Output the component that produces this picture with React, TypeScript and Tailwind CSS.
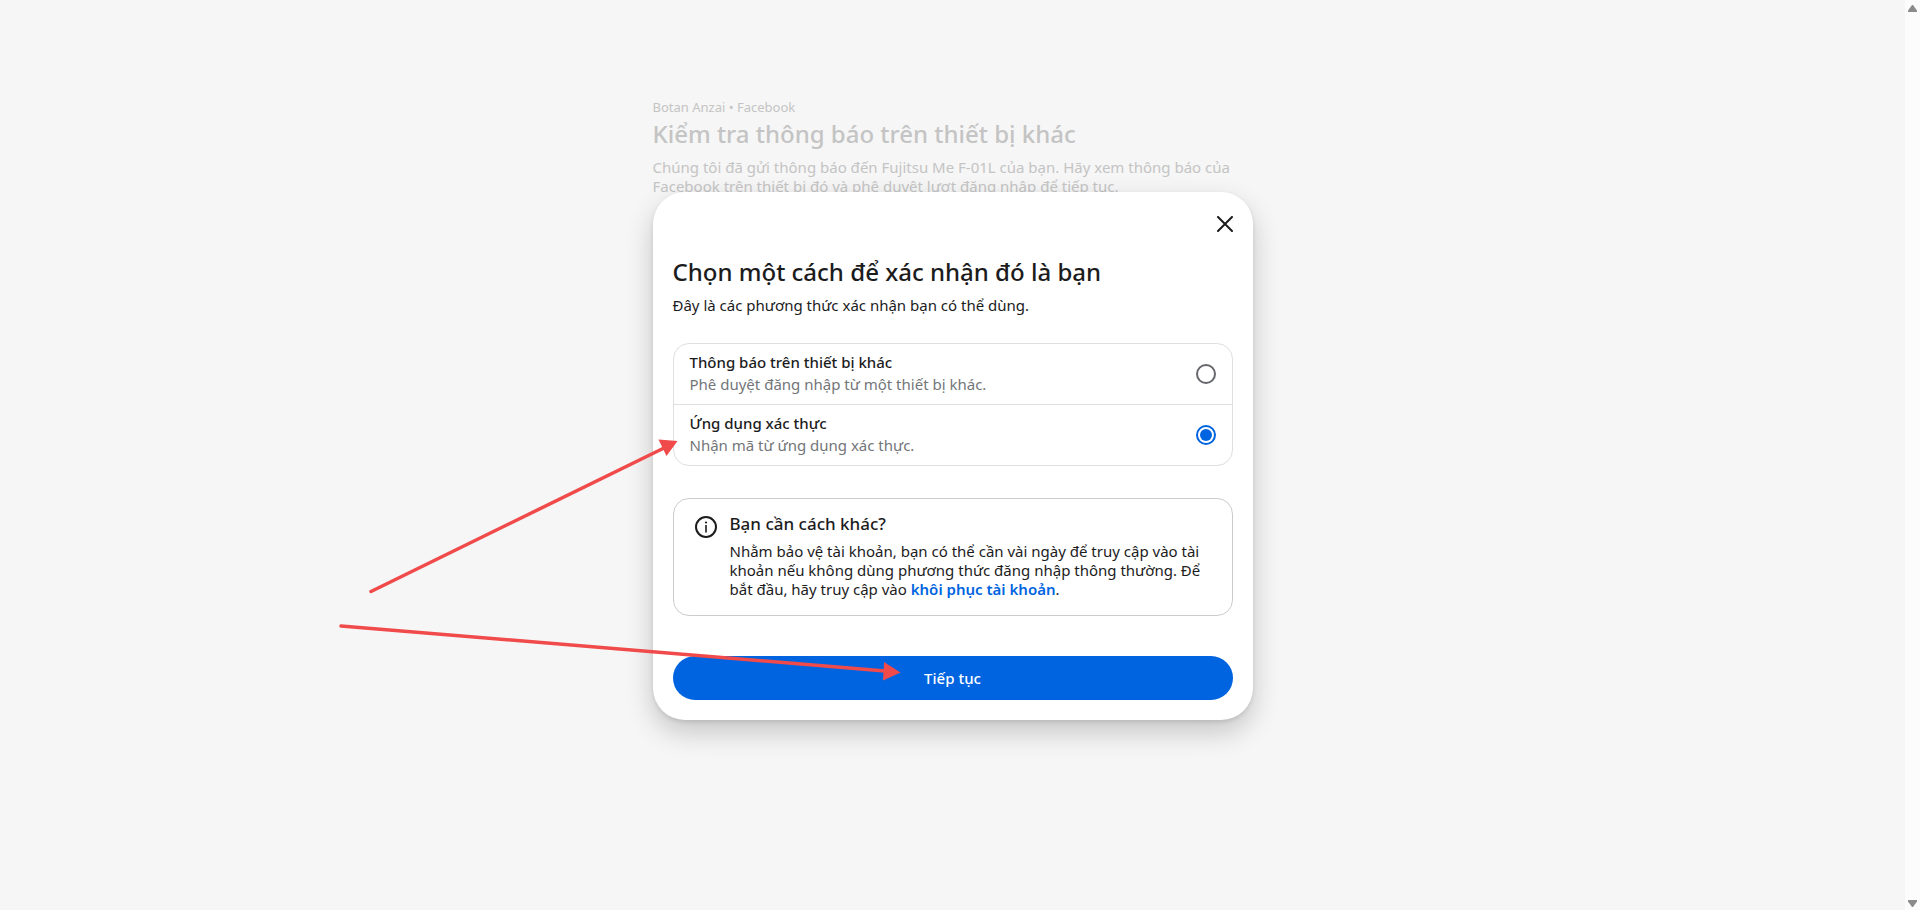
import { useState } from "react";

const methods = [
    {
        id: "notification",
        title: "Thông báo trên thiết bị khác",
        detail: "Phê duyệt đăng nhập từ một thiết bị khác.",
    },
    {
        id: "authenticator",
        title: "Ứng dụng xác thực",
        detail: "Nhận mã từ ứng dụng xác thực.",
    },
];

function ScrollRail() {
    return (
        <div aria-hidden="true" className="w-[15px] shrink-0 bg-[#fcfcfc] flex flex-col justify-between items-center pt-[5px] pb-[3px]">
            <svg width="9" height="7" viewBox="0 0 9 7" fill="#8b8b8b"><path d="M4 0h1l4 5.500V7H0V5.500z" /></svg>
            <svg width="9" height="7" viewBox="0 0 9 7" fill="#8b8b8b"><path d="M4 7h1l4-5.500V0H0v1.500z" /></svg>
        </div>
    );
}

function Arrows() {
    return (
        <svg aria-hidden="true" viewBox="0 0 1920 910" className="absolute inset-0 w-full h-full pointer-events-none" fill="#f04a4a" stroke="#f04a4a">
            <path d="M371 591.500 664 448M341 626l544 45" strokeWidth="3.500" strokeLinecap="round" fill="none" />
            <path d="M658.500 439.500 677.500 441 666.500 456z" stroke="none" />
            <path d="M884 662 900.500 672.500 883 680.500z" stroke="none" />
        </svg>
    );
}

export default function App() {
    const [method, setMethod] = useState("authenticator");

    return (
        <div className="relative flex min-h-screen bg-[#f6f6f6] font-['Noto_Sans',sans-serif] text-[#1c1c1d]">
            <div className="relative flex-1 px-4">
                <section className="max-w-[600px] mx-auto pt-[98px] text-[#c4c4c4]">
                    <p className="text-[13px] leading-[18px]">Botan Anzai • Facebook</p>
                    <h1 className="mt-1 text-[24px] leading-[28px] font-medium">Kiểm tra thông báo trên thiết bị khác</h1>
                    <p className="mt-2.5 text-[15px] leading-[19px]">
                        Chúng tôi đã gửi thông báo đến Fujitsu Me F-01L của bạn. Hãy xem thông báo của Facebook trên thiết bị đó và phê duyệt lượt đăng nhập để tiếp tục.
                    </p>
                </section>

                <div className="absolute inset-0 px-4 pt-0.5 flex items-center justify-center">
                    <form role="dialog" aria-labelledby="dialog-title" onSubmit={e => e.preventDefault()} className="w-full max-w-[600px] p-5 bg-white rounded-[32px] shadow-[0_12px_28px_rgba(0,0,0,0.2),0_2px_4px_rgba(0,0,0,0.1)]">
                        <div className="flex justify-end">
                            <button type="button" aria-label="Đóng" className="py-1">
                                <svg width="16" height="16" viewBox="0 0 16 16" stroke="#1c1c1d" strokeWidth="2" strokeLinecap="round">
                                    <path d="M1 1l14 14M15 1 1 15" />
                                </svg>
                            </button>
                        </div>

                        <h2 id="dialog-title" className="mt-[22px] text-[24px] leading-[28px] font-medium">Chọn một cách để xác nhận đó là bạn</h2>
                        <p className="mt-2.5 text-[15px] leading-[19px]">Đây là các phương thức xác nhận bạn có thể dùng.</p>

                        <div className="mt-7 border border-[#dedfe1] rounded-2xl divide-y divide-[#dedfe1]">
                            {methods.map(item => (
                                <label key={item.id} htmlFor={item.id} className="flex items-center justify-between px-4">
                                    <span className="flex flex-col gap-0.5 pt-2 pb-2.5 text-[15px] leading-[20px]">
                                        <span className="font-medium">{item.title}</span>
                                        <span className="text-[#737679]">{item.detail}</span>
                                    </span>
                                    <input
                                        type="radio"
                                        id={item.id}
                                        name="method"
                                        checked={method === item.id}
                                        onChange={() => setMethod(item.id)}
                                        className="appearance-none size-5 shrink-0 rounded-full border-2 border-[#65676b] p-0.5 bg-clip-content checked:border-[#0064e0] checked:bg-[#0064e0]" />
                                </label>
                            ))}
                        </div>

                        <div className="mt-8 flex gap-3 border border-[#cbcccf] rounded-2xl px-5 pt-[14px] pb-4">
                            <svg width="24" height="24" viewBox="0 0 24 24" fill="none" stroke="#1c1c1d" className="shrink-0 mt-0.5">
                                <circle cx="12" cy="12" r="10" strokeWidth="2" />
                                <path d="M12 10v7.500" strokeWidth="1.600" />
                                <circle cx="12" cy="7.500" r="1.100" fill="#1c1c1d" stroke="none" />
                            </svg>
                            <div>
                                <h3 className="text-[17px] leading-[22px] font-medium">Bạn cần cách khác?</h3>
                                <p className="mt-[7px] text-[15px] leading-[19px]">
                                    Nhằm bảo vệ tài khoản, bạn có thể cần vài ngày để truy cập vào tài khoản nếu không dùng phương thức đăng nhập thông thường. Để bắt đầu, hãy truy cập vào <a href="#" className="font-semibold text-[#0064e0]">khôi phục tài khoản</a>.
                                </p>
                            </div>
                        </div>

                        <button type="submit" className="mt-10 w-full h-11 rounded-full bg-[#0064e0] text-white text-[15px] leading-[20px] font-medium">
                            Tiếp tục
                        </button>
                    </form>
                </div>
            </div>
            <ScrollRail />
            <Arrows />
        </div>
    );
}
